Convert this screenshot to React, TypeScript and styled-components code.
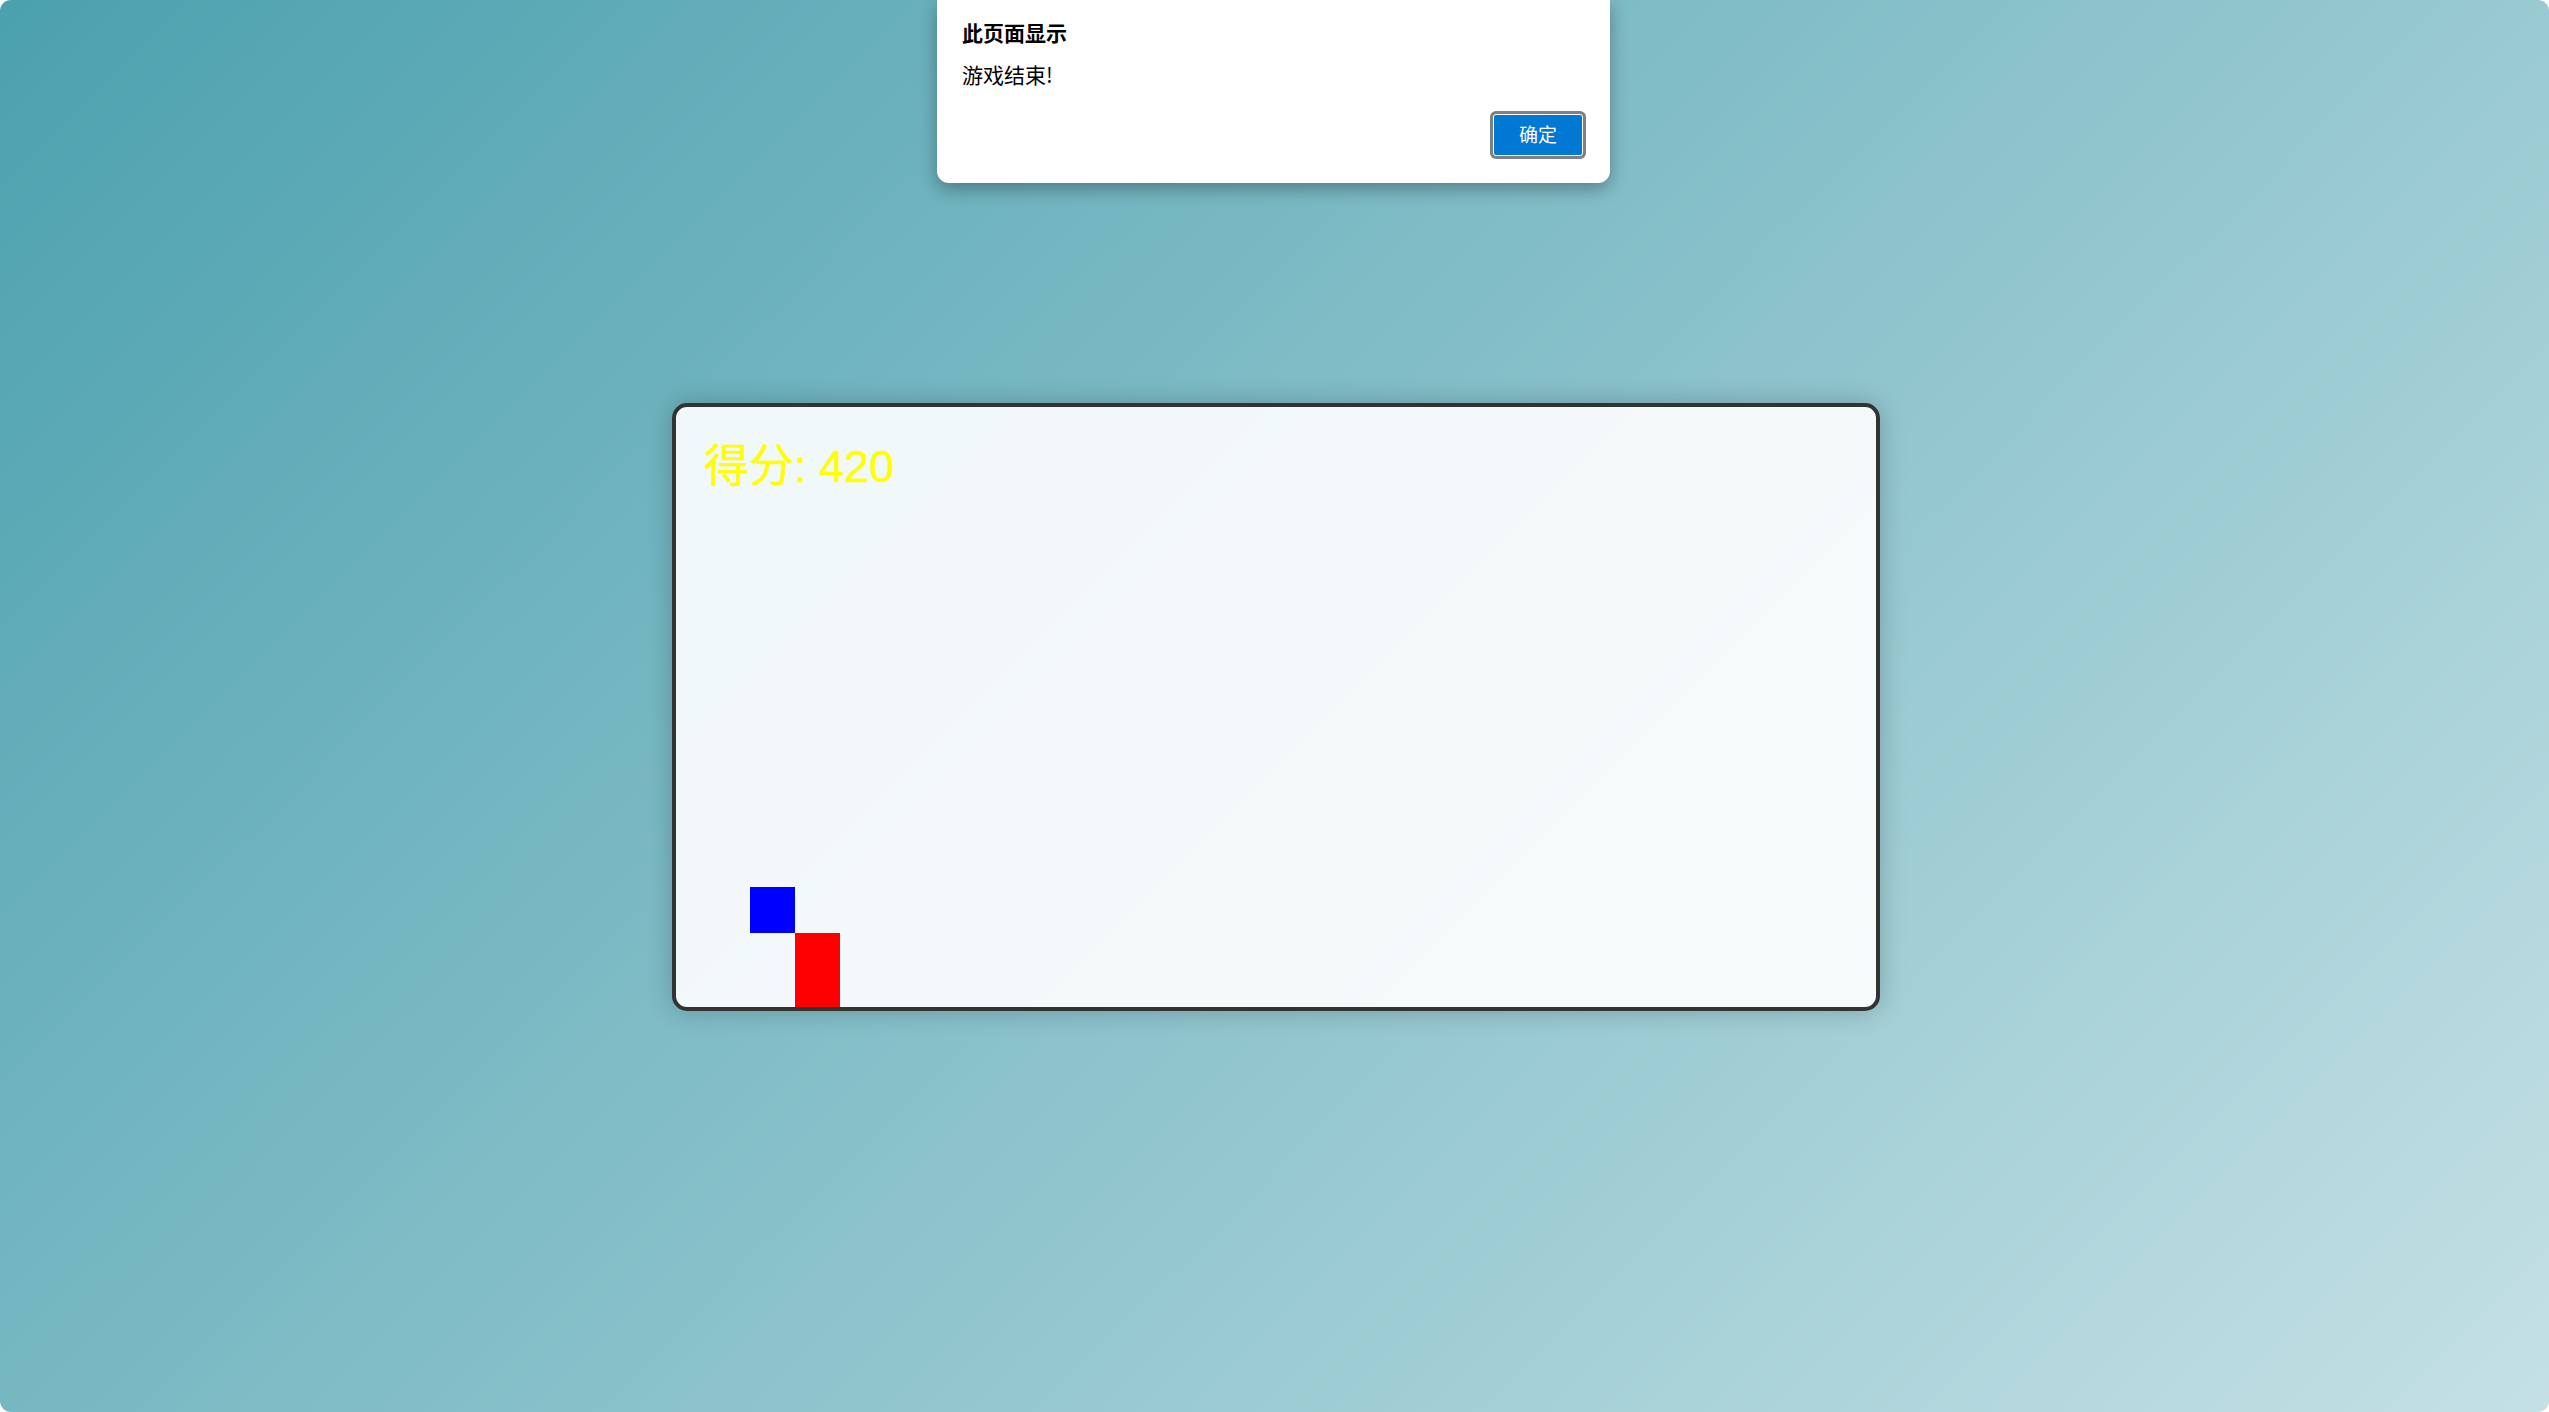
import React from "react";
import styled, { createGlobalStyle } from "styled-components";

const GlobalStyle = createGlobalStyle`
  html {
    margin: 0;
    padding: 0;
    background: #ffffff;
  }
  body {
    margin: 0;
    padding: 0;
  }
  * {
    box-sizing: border-box;
  }
`;

const Page = styled.div`
  position: relative;
  width: 100vw;
  height: 100vh;
  overflow: hidden;
  border-radius: 11px;
  background: linear-gradient(135deg, #4ca1af 0%, #c4e0e5 100%);
  display: flex;
  align-items: center;
  justify-content: center;
`;

const GameFrame = styled.div`
  width: 1208px;
  height: 608px;
  border: 4px solid #333333;
  border-radius: 15px;
  background: rgba(255, 255, 255, 0.9);
  box-shadow: 0 0 26px rgba(0, 0, 0, 0.22);
  overflow: hidden;
  margin-left: 3px;
  margin-top: 1px;
`;

const Board = styled.div`
  position: relative;
  width: 1200px;
  height: 600px;
  overflow: hidden;
`;

const Score = styled.div`
  position: absolute;
  left: 28px;
  top: 37px;
  font-family: "Liberation Sans", Arial, "Noto Sans CJK SC", sans-serif;
  font-size: 45px;
  line-height: 46px;
  color: #ffff00;
  white-space: nowrap;
  -webkit-text-stroke: 0.4px #ffff00;
`;

const Cell = styled.div<{ $color: string }>`
  position: absolute;
  width: 45px;
  height: 46px;
  background: ${(p) => p.$color};
`;

const Dialog = styled.div`
  position: absolute;
  top: 0;
  left: 937px;
  width: 673px;
  height: 183px;
  background: #ffffff;
  border-radius: 0 0 12px 12px;
  box-shadow: 0 6px 18px rgba(0, 0, 0, 0.32);
  padding: 20px 27px 27px 25px;
  display: flex;
  flex-direction: column;
  font-family: "Noto Sans CJK SC", "Microsoft YaHei", sans-serif;
  color: #000000;
`;

const DialogTitle = styled.div`
  font-size: 21px;
  font-weight: 700;
  line-height: 24px;
`;

const DialogMessage = styled.div`
  margin-top: 18px;
  font-size: 21px;
  line-height: 24px;
`;

const DialogFooter = styled.div`
  margin-top: auto;
  display: flex;
  justify-content: flex-end;
`;

const OkButton = styled.button`
  width: 90px;
  height: 42px;
  border: 1px solid #ffffff;
  border-radius: 3px;
  background: #0078d4;
  color: #ffffff;
  font-family: "Noto Sans CJK SC", "Microsoft YaHei", sans-serif;
  font-size: 19px;
  line-height: 1;
  box-shadow: 0 0 0 3px #7d8186;
  padding: 0 0 3px 0;
  cursor: pointer;
`;

const cells = [
  { x: 74, y: 480, color: "#0000ff" },
  { x: 119, y: 526, color: "#ff0000" },
  { x: 119, y: 571, color: "#ff0000" },
];

export default function App() {
  return (
    <>
      <GlobalStyle />
      <Page>
        <GameFrame>
          <Board>
            <Score>得分: 420</Score>
            {cells.map((c, i) => (
              <Cell key={i} $color={c.color} style={{ left: c.x, top: c.y }} />
            ))}
          </Board>
        </GameFrame>
        <Dialog>
          <DialogTitle>此页面显示</DialogTitle>
          <DialogMessage>游戏结束!</DialogMessage>
          <DialogFooter>
            <OkButton>确定</OkButton>
          </DialogFooter>
        </Dialog>
      </Page>
    </>
  );
}
